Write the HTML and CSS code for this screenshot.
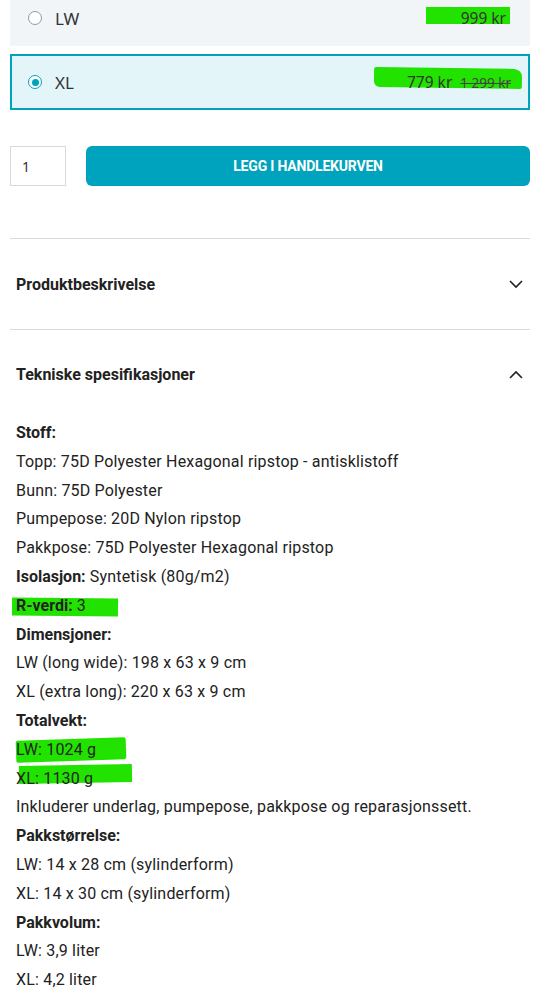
FILE: index.html
```html
<!DOCTYPE html>
<html lang="no">
<head>
<meta charset="utf-8">
<title>Produkt</title>
<link rel="stylesheet" href="styles.css">
</head>
<body>
<div class="page">
  <div class="variants">
    <label class="variant">
      <span class="radio"></span>
      <span class="vname">LW</span>
      <span class="price"><span class="mark mark-lw"></span><span class="now">999 kr</span></span>
    </label>
    <label class="variant selected">
      <span class="radio on"></span>
      <span class="vname">XL</span>
      <span class="price"><span class="mark mark-xl"></span><span class="now">779 kr</span><s class="old">1 299 kr</s></span>
    </label>
  </div>

  <div class="buy">
    <div class="qty">1</div>
    <button class="add">LEGG I HANDLEKURVEN</button>
  </div>

  <div class="accordion">
    <div class="acc-item">
      <div class="acc-head">
        <span>Produktbeskrivelse</span>
        <svg class="chev" width="16" height="10" viewBox="0 0 16 10"><path d="M2 2 L8 8 L14 2" fill="none" stroke="#222" stroke-width="1.6"/></svg>
      </div>
    </div>
    <div class="acc-item open">
      <div class="acc-head">
        <span>Tekniske spesifikasjoner</span>
        <svg class="chev" width="16" height="10" viewBox="0 0 16 10"><path d="M2 8 L8 2 L14 8" fill="none" stroke="#222" stroke-width="1.6"/></svg>
      </div>
      <div class="acc-body">
        <p><b>Stoff:</b></p>
        <p>Topp: 75D Polyester Hexagonal ripstop - antisklistoff</p>
        <p>Bunn: 75D Polyester</p>
        <p>Pumpepose: 20D Nylon ripstop</p>
        <p>Pakkpose: 75D Polyester Hexagonal ripstop</p>
        <p><b>Isolasjon:</b> Syntetisk (80g/m2)</p>
        <p><span class="hl"><span class="mark mark-r"></span><b>R-verdi:</b> 3</span></p>
        <p><b>Dimensjoner:</b></p>
        <p>LW (long wide): 198 x 63 x 9 cm</p>
        <p>XL (extra long): 220 x 63 x 9 cm</p>
        <p><b>Totalvekt:</b></p>
        <p><span class="hl"><span class="mark mark-w1"></span>LW: 1024 g</span></p>
        <p><span class="hl"><span class="mark mark-w2"></span>XL: 1130 g</span></p>
        <p>Inkluderer underlag, pumpepose, pakkpose og reparasjonssett.</p>
        <p><b>Pakkstørrelse:</b></p>
        <p>LW: 14 x 28 cm (sylinderform)</p>
        <p>XL: 14 x 30 cm (sylinderform)</p>
        <p><b>Pakkvolum:</b></p>
        <p>LW: 3,9 liter</p>
        <p>XL: 4,2 liter</p>
      </div>
    </div>
  </div>
</div>
</body>
</html>
```

FILE: styles.css
```css
* { box-sizing: border-box; }
html, body { margin: 0; padding: 0; background: #fff; }
body {
  font-family: Roboto, "Liberation Sans", sans-serif;
  color: #222;
  overflow: hidden;
}
.page { padding: 0 23px 0 10px; }

.variants {
  display: flex;
  flex-direction: column;
  gap: 8px;
  margin-top: -10px;
}
.variant {
  height: 56px;
  display: flex;
  align-items: center;
  padding: 0 22px 0 16px;
  background: #f1f5f8;
  border: 2px solid transparent;
  font-family: "Noto Sans", "Open Sans", sans-serif;
  font-size: 15.5px;
  color: #333;
}
.variant.selected {
  background: #e3f5f8;
  border-color: #00a3bd;
}
.radio {
  width: 14px;
  height: 14px;
  border-radius: 50%;
  border: 1px solid #8d9aa4;
  background: #fff;
  display: flex;
  align-items: center;
  justify-content: center;
  flex: none;
}
.radio.on { border: 1.5px solid #00a3bd; }
.radio.on::after {
  content: "";
  width: 7px;
  height: 7px;
  border-radius: 50%;
  background: #00a3bd;
}
.vname { margin-left: 13px; flex: 1; font-size: 17px; }
.price {
  position: relative;
  display: flex;
  align-items: baseline;
  gap: 8px;
  z-index: 0;
}
.variant.selected .price { margin-right: -5px; }
.old { font-size: 13.5px; color: #444; }

.mark {
  position: absolute;
  background: #22e300;
  z-index: -1;
}
.mark-lw { left: -35px; right: -4px; top: 0px; height: 17px; }
.mark-xl {
  left: -33px; right: -11px; top: -3px; height: 20px;
  border-radius: 2px 8px 2px 6px;
  transform: rotate(0.8deg);
}
.hl { position: relative; display: inline-block; z-index: 0; }
.mark-r { left: -4px; width: 106px; top: 6px; height: 18px; transform: rotate(0.6deg); }
.mark-w1 { left: 0; width: 110px; top: 3px; height: 22px; transform: rotate(-2deg); border-radius: 2px; }
.mark-w2 { left: 3px; width: 113px; top: 0px; height: 18px; transform: rotate(-1deg); }

.buy {
  display: flex;
  gap: 20px;
  margin-top: 36px;
  height: 40px;
}
.qty {
  width: 56px;
  border: 1px solid #d3dbe0;
  font-size: 14px;
  color: #333;
  display: flex;
  align-items: center;
  padding-left: 11px;
  font-family: "Noto Sans", sans-serif;
}
.add {
  flex: 1;
  border: none;
  border-radius: 6px;
  background: #00a3bd;
  color: #fff;
  font-family: Roboto, sans-serif;
  font-weight: 700;
  font-size: 14px;
  letter-spacing: -0.2px;
  padding: 0;
}

.accordion {
  margin-top: 52px;
  border-top: 1px solid #d5dde2;
}
.acc-item { border-bottom: 1px solid #d5dde2; }
.acc-item.open { border-bottom: none; }
.acc-head {
  height: 90px;
  display: flex;
  align-items: center;
  justify-content: space-between;
  padding: 0 6px;
  font-weight: 700;
  font-size: 16px;
}
.acc-item.open .acc-head { height: 89px; }
.chev { display: block; }
.acc-body { padding: 0 6px; }
.acc-body p {
  margin: 0;
  font-size: 16px;
  line-height: 28.8px;
  letter-spacing: 0.18px;
}
.acc-body b { font-weight: 700; letter-spacing: 0; }
```
